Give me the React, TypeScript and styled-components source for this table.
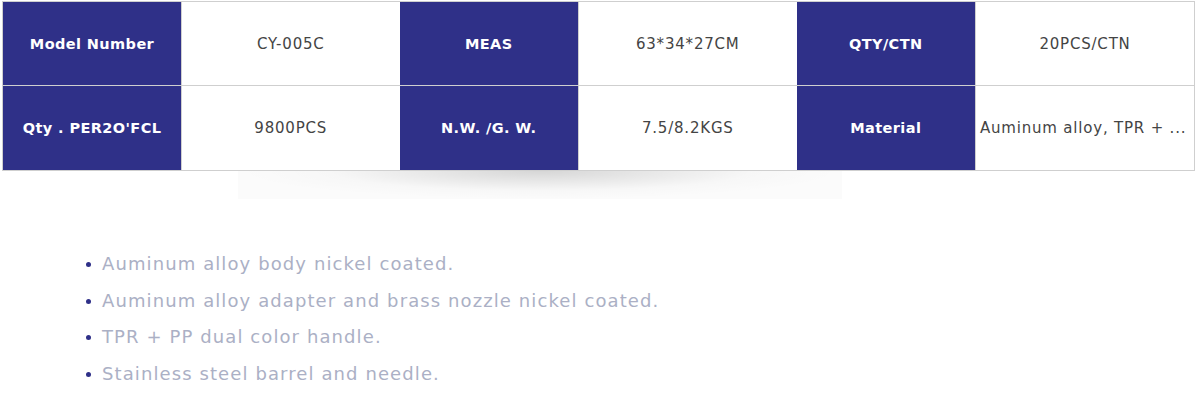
import React, { ReactElement } from 'react'
import styled, { createGlobalStyle } from 'styled-components'

const GlobalStyle = createGlobalStyle`
  body {
    margin: 0;
    background: #fff;
    font-family: 'DejaVu Sans', 'Noto Sans', sans-serif;
  }
`

const specs: [string, string, string, string, string, string][] = [
  ['Model Number', 'CY-005C', 'MEAS', '63*34*27CM', 'QTY/CTN', '20PCS/CTN'],
  ["Qty . PER2O'FCL", '9800PCS', 'N.W. /G. W.', '7.5/8.2KGS', 'Material', 'Auminum alloy, TPR + ...'],
]

const features = [
  'Auminum alloy body nickel coated.',
  'Auminum alloy adapter and brass nozzle nickel coated.',
  'TPR + PP dual color handle.',
  'Stainless steel barrel and needle.',
]

const App: React.FC = (): ReactElement => {
  return (
    <Page>
      <GlobalStyle />
      <SpecTable>
        <colgroup>
          <Col $w={179} />
          <Col $w={218} />
          <Col $w={179} />
          <Col $w={218} />
          <Col $w={179} />
          <Col $w={219} />
        </colgroup>
        <tbody>
          {specs.map((row) => (
            <tr key={row[0]}>
              {row.map((cell, i) =>
                i % 2 === 0 ? (
                  <Label key={i}>{cell}</Label>
                ) : (
                  <Value key={i} $left={cell.length > 20}>
                    {cell}
                  </Value>
                )
              )}
            </tr>
          ))}
        </tbody>
      </SpecTable>
      <Shadow />
      <Features>
        {features.map((f) => (
          <li key={f}>{f}</li>
        ))}
      </Features>
    </Page>
  )
}

const Page = styled.div`
  padding: 1px 0 0 2px;
`

const SpecTable = styled.table`
  border-collapse: collapse;
  table-layout: fixed;
  border: 1px solid #cfcfcf;

  tr {
    height: 84px;
  }

  tr + tr {
    height: 85px;
  }

  tr + tr td,
  tr + tr th {
    border-top: 1px solid #cfcfcf;
  }
`

const Col = styled.col<{ $w: number }>`
  width: ${(p) => p.$w}px;
`

const Label = styled.th`
  background: #2f3088;
  color: #fff;
  font-size: 14.5px;
  font-weight: 700;
  letter-spacing: 0.4px;
  text-align: center;
  padding: 0;
`

const Value = styled.td<{ $left?: boolean }>`
  color: #444;
  font-size: 15px;
  letter-spacing: 0.8px;
  text-align: ${(p) => (p.$left ? 'left' : 'center')};
  padding: ${(p) => (p.$left ? '0 0 0 4px' : '0')};
  white-space: nowrap;
  overflow: hidden;
  border-left: 1px solid #cfcfcf;
`

const Shadow = styled.div`
  margin-left: 236px;
  width: 604px;
  height: 28px;
  background:
    radial-gradient(ellipse 50% 100% at 50% 0, rgba(0, 0, 0, 0.16), rgba(0, 0, 0, 0.03) 70%, rgba(0, 0, 0, 0.015));
`

const Features = styled.ul`
  list-style: none;
  margin: 47px 0 0;
  padding: 0 0 0 84px;

  li {
    position: relative;
    padding-left: 16px;
    color: #abb0c5;
    font-size: 18px;
    letter-spacing: 1.1px;
    line-height: 36.7px;
  }

  li::before {
    content: '';
    position: absolute;
    left: 0;
    top: 16px;
    width: 5px;
    height: 5px;
    border-radius: 50%;
    background: #2f3088;
  }
`

export default App
